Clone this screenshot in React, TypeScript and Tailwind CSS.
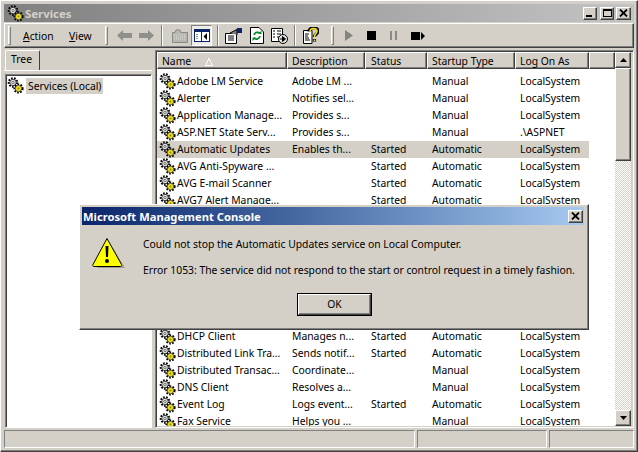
import React from 'react'

const raised =
  'border border-t-white border-l-white border-b-[#404040] border-r-[#404040] shadow-[inset_-1px_-1px_0_#808080]'
const sunken =
  'border border-t-[#808080] border-l-[#808080] border-b-white border-r-white shadow-[inset_1px_1px_0_#404040]'
const etched = 'border border-t-[#808080] border-l-[#808080] border-b-white border-r-white'

const rowsTop = [
  ['Adobe LM Service', 'Adobe LM ...', '', 'Manual', 'LocalSystem'],
  ['Alerter', 'Notifies sel...', '', 'Manual', 'LocalSystem'],
  ['Application Manage...', 'Provides s...', '', 'Manual', 'LocalSystem'],
  ['ASP.NET State Serv...', 'Provides s...', '', 'Manual', '.\\ASPNET'],
  ['Automatic Updates', 'Enables th...', 'Started', 'Automatic', 'LocalSystem'],
  ['AVG Anti-Spyware ...', '', 'Started', 'Automatic', 'LocalSystem'],
  ['AVG E-mail Scanner', '', 'Started', 'Automatic', 'LocalSystem'],
  ['AVG7 Alert Manage...', '', 'Started', 'Automatic', 'LocalSystem'],
]

const rowsBottom = [
  ['DHCP Client', 'Manages n...', 'Started', 'Automatic', 'LocalSystem'],
  ['Distributed Link Tra...', 'Sends notif...', 'Started', 'Automatic', 'LocalSystem'],
  ['Distributed Transac...', 'Coordinate...', '', 'Manual', 'LocalSystem'],
  ['DNS Client', 'Resolves a...', '', 'Manual', 'LocalSystem'],
  ['Event Log', 'Logs event...', 'Started', 'Automatic', 'LocalSystem'],
  ['Fax Service', 'Helps you ...', '', 'Manual', 'LocalSystem'],
]

const Gears = () => (
  <svg width="17" height="17" viewBox="0 0 17 17" className="shrink-0">
    <circle cx="6" cy="5.5" r="4.2" fill="none" stroke="#000" strokeWidth="2.2" strokeDasharray="1.6 1.3" />
    <circle cx="6" cy="5.5" r="3.2" fill="#e0e0e0" stroke="#222" strokeWidth="0.8" />
    <circle cx="6" cy="5.5" r="1.1" fill="#fff" stroke="#222" strokeWidth="0.6" />
    <circle cx="11.5" cy="11.5" r="4" fill="none" stroke="#000" strokeWidth="2.2" strokeDasharray="1.6 1.3" />
    <circle cx="11.5" cy="11.5" r="3.2" fill="#f2e21c" stroke="#333" strokeWidth="0.8" />
    <circle cx="11.5" cy="11.5" r="1" fill="#8a8000" />
  </svg>
)

const Grip = () => <div className="w-[3px] h-[19px] bg-[#d4d0c8] border border-t-white border-l-white border-b-[#808080] border-r-[#808080]" />
const Sep = () => <div className="w-[2px] h-[21px] border-l border-l-[#808080] border-r border-r-white" />

const Row = ({ cells, selected }: { cells: string[]; selected?: boolean }) => (
  <div className={`flex items-center h-[17px] ${selected ? 'bg-[#d4d0c8]' : ''} w-[432px]`}>
    <div className="w-[130px] flex items-center pl-[2px] gap-[1px]">
      <Gears />
      <span className="whitespace-nowrap">{cells[0]}</span>
    </div>
    <div className="w-[78px] pl-[5px] whitespace-nowrap">{cells[1]}</div>
    <div className="w-[62px] pl-[6px]">{cells[2]}</div>
    <div className="w-[88px] pl-[5px]">{cells[3]}</div>
    <div className="w-[74px] pl-[5px]">{cells[4]}</div>
  </div>
)

const HeaderCell = ({ width, children }: { width: string; children?: React.ReactNode }) => (
  <div className={`${width} h-full flex items-center pl-[4px] pt-[2px] ${raised}`}>{children}</div>
)

const CaptionButton = ({ children, className }: { children: React.ReactNode; className?: string }) => (
  <div className={`h-[13px] bg-[#d4d0c8] flex items-center justify-center ${raised} ${className ?? ''}`}>{children}</div>
)

const CloseGlyph = () => (
  <svg width="9" height="8" viewBox="0 0 9 8">
    <path d="M1 0.5 L8 7.5 M8 0.5 L1 7.5" stroke="#000" strokeWidth="1.8" />
  </svg>
)

export default function App() {
  return (
    <div className={`relative w-[638px] h-[452px] overflow-hidden bg-[#d4d0c8] p-[3px] flex flex-col text-[10.35px] leading-[13px] text-black font-['Noto_Sans',sans-serif] ${raised}`}>
      {/* title bar */}
      <div className="h-[18px] shrink-0 flex items-center pl-[3px] pr-[3px] bg-gradient-to-r from-[#808080] to-[#c4c4c4]">
        <Gears />
        <span className="ml-[1px] font-bold text-[11.4px] text-[#d4d0c8]">Services</span>
        <div className="ml-auto flex items-center">
          <CaptionButton className="w-[14px]"><div className="w-[6px] h-[2px] bg-black mt-[6px] mr-[2px]" /></CaptionButton>
          <CaptionButton className="w-[14px] ml-[3px]"><div className="w-[9px] h-[8px] border border-black border-t-2" /></CaptionButton>
          <CaptionButton className="w-[15px] ml-[2px]"><CloseGlyph /></CaptionButton>
        </div>
      </div>

      {/* toolbar */}
      <div className={`mt-[1px] h-[25px] shrink-0 flex items-center pl-[3px] ${raised}`}>
        <Grip />
        <span className="ml-[12px] mt-[1px] w-[46px]"><span className="underline">A</span>ction</span>
        <span className="mt-[1px] w-[36px]"><span className="underline">V</span>iew</span>
        <Grip />
        <svg width="15" height="11" viewBox="0 0 15 11" className="ml-[9px]">
          <path d="M0 5.5 L6 0 V3 H15 V8 H6 V11 Z" fill="#8f8f8b" />
        </svg>
        <svg width="15" height="11" viewBox="0 0 15 11" className="ml-[7px]">
          <path d="M15 5.5 L9 0 V3 H0 V8 H9 V11 Z" fill="#8f8f8b" />
        </svg>
        <div className="ml-[7px]"><Sep /></div>
        <svg width="16" height="14" viewBox="0 0 16 14" className="ml-[9px]">
          <path d="M0.5 3.5 H3 L4 1 H8 L9 3.5 H15.5 V13.5 H0.5 Z" fill="#b8b6b0" stroke="#8a8a86" />
          <path d="M2 6 H14 M2 8 H14 M2 10 H14" stroke="#dcdad4" strokeDasharray="1 1" />
        </svg>
        <div className="ml-[3px] w-[21px] h-[21px] flex items-center justify-center border border-t-[#808080] border-l-[#808080] border-b-white border-r-white bg-[#eeece8]">
          <svg width="16" height="13" viewBox="0 0 16 13">
            <rect x="0" y="0" width="16" height="13" fill="#0a246a" />
            <rect x="1" y="3" width="6" height="9" fill="#fff" />
            <rect x="8" y="3" width="7" height="9" fill="#fff" />
            <path d="M13 4 V11 L9.5 7.5 Z" fill="#000" />
            <path d="M3 5 V10" stroke="#0a246a" strokeDasharray="1 1" />
          </svg>
        </div>
        <div className="ml-[5px]"><Sep /></div>
        <svg width="18" height="16" viewBox="0 0 18 16" className="ml-[6px]">
          <path d="M0.5 5.5 H11.5 V15.5 H0.5 Z" fill="#fff" stroke="#000" />
          <path d="M3 8 H9 M3 10 H9 M3 12 H9" stroke="#000" />
          <path d="M5 5 L12 1.5 V7" fill="#808080" stroke="#000" />
          <rect x="12" y="0" width="5" height="5" fill="#0a246a" />
        </svg>
        <svg width="14" height="17" viewBox="0 0 14 17" className="ml-[7px]">
          <path d="M0.5 0.5 H9 L13.5 5 V16.5 H0.5 Z" fill="#fff" stroke="#000" />
          <path d="M4 8 A3.5 3.5 0 0 1 10 6.5 M10 9 A3.5 3.5 0 0 1 4 11" fill="none" stroke="#0a8a2a" strokeWidth="1.8" />
          <path d="M8 7 H11.5 V3.5 Z M6 10.5 H2.5 V14 Z" fill="#0a8a2a" />
        </svg>
        <svg width="17" height="16" viewBox="0 0 17 16" className="ml-[7px]">
          <path d="M0.5 0.5 H11.5 V13.5 H0.5 Z" fill="#fff" stroke="#000" />
          <path d="M2 3 H4 M6 3 H10 M2 6 H4 M6 6 H10 M2 9 H4 M6 9 H8" stroke="#000" />
          <circle cx="12" cy="11" r="4.5" fill="#e8e8e8" stroke="#000" />
          <path d="M9 11 H13 M11.5 8.5 L14.5 11 L11.5 13.5 Z" stroke="#000" fill="#000" />
        </svg>
        <div className="ml-[6px]"><Sep /></div>
        <svg width="16" height="17" viewBox="0 0 16 17" className="ml-[7px]">
          <path d="M0.5 3.5 H9 V16.5 H0.5 Z" fill="#fff" stroke="#000" />
          <path d="M2 7 H6 M2 9 H5 M2 11 H6 M2 13 H7" stroke="#000" />
          <path d="M6 4.5 C6 -0.5 15 -0.5 15 4 C15 7 11.5 7 11.5 10 M11.5 12 V14.5" fill="none" stroke="#000" strokeWidth="3.2" />
          <path d="M7 4.5 C7 0.5 14 0.5 14 4 C14 6.5 11.5 6.8 11.5 10 M11.5 12.5 V14" fill="none" stroke="#f4e21c" strokeWidth="1.6" />
        </svg>
        <div className="ml-[12px]"><Grip /></div>
        <svg width="8" height="11" viewBox="0 0 8 11" className="ml-[11px]">
          <path d="M0 0 L8 5.5 L0 11 Z" fill="#85857f" />
        </svg>
        <div className="ml-[14px] w-[9px] h-[9px] bg-black" />
        <div className="ml-[14px] flex gap-[3px]">
          <div className="w-[2px] h-[9px] bg-[#8a8a86]" />
          <div className="w-[2px] h-[9px] bg-[#8a8a86]" />
        </div>
        <div className="ml-[14px] w-[9px] h-[8px] bg-black" />
        <svg width="4" height="8" viewBox="0 0 4 8" className="ml-[1px]">
          <path d="M0 0 L4 4 L0 8 Z" fill="#000" />
        </svg>
      </div>

      {/* panes */}
      <div className="mt-[2px] flex-1 min-h-0 flex">
        <div className="w-[148px] shrink-0 flex flex-col">
          <div className="h-[21px] shrink-0 flex items-end border-b border-b-white">
            <div className="ml-[1px] h-[20px] w-[35px] pl-[5px] pt-[2px] border border-t-white border-l-white border-r-[#404040] border-b-0 rounded-t-[2px]">Tree</div>
          </div>
          <div className={`mt-[3px] ml-[1px] flex-1 bg-white ${sunken}`}>
            <div className="flex items-center pt-[2px] pl-[1px]">
              <Gears />
              <span className="ml-[2px] bg-[#d4d0c8] h-[16px] leading-[16px] px-[2px]">Services (Local)</span>
            </div>
          </div>
        </div>

        <div className={`ml-[3px] flex-1 min-w-0 flex overflow-hidden p-[1px] ${sunken}`}>
          <div className="flex-1 min-w-0 bg-white flex flex-col overflow-hidden">
            <div className="h-[17px] shrink-0 flex bg-[#d4d0c8]">
              <HeaderCell width="w-[130px]">
                <span>Name</span>
                <svg width="8" height="8" viewBox="0 0 8 8" className="ml-[14px]">
                  <path d="M4 0.5 L7.5 7.5 H0.5 Z" fill="#d4d0c8" stroke="#fff" />
                </svg>
              </HeaderCell>
              <HeaderCell width="w-[78px]">Description</HeaderCell>
              <HeaderCell width="w-[62px]"><span className="ml-[1px]">Status</span></HeaderCell>
              <HeaderCell width="w-[88px]">Startup Type</HeaderCell>
              <HeaderCell width="w-[74px]">Log On As</HeaderCell>
              <HeaderCell width="flex-1" />
            </div>
            <div className="flex-1 min-h-0 pt-[4px] overflow-hidden">
              {rowsTop.map((r) => (
                <Row key={r[0]} cells={r} selected={r[0] === 'Automatic Updates'} />
              ))}
              <div className="h-[119px]" />
              {rowsBottom.map((r) => (
                <Row key={r[0]} cells={r} />
              ))}
            </div>
          </div>
          {/* scrollbar */}
          <div className="w-[16px] shrink-0 flex flex-col mr-[1px]">
            <div className={`h-[16px] shrink-0 bg-[#d4d0c8] flex items-center justify-center ${raised}`}>
              <svg width="7" height="4" viewBox="0 0 7 4"><path d="M3.5 0 L7 4 H0 Z" fill="#000" /></svg>
            </div>
            <div className={`h-[93px] shrink-0 bg-[#d4d0c8] ${raised}`} />
            <div className="flex-1 bg-[repeating-conic-gradient(#d4d0c8_0_25%,#fff_0_50%)] bg-[length:2px_2px]" />
            <div className={`h-[16px] shrink-0 bg-[#d4d0c8] flex items-center justify-center ${raised}`}>
              <svg width="7" height="4" viewBox="0 0 7 4"><path d="M0 0 H7 L3.5 4 Z" fill="#000" /></svg>
            </div>
          </div>
        </div>
      </div>

      {/* status bar */}
      <div className="mt-[2px] h-[18px] shrink-0 flex gap-[2px]">
        <div className={`w-[411px] ${etched}`} />
        <div className={`w-[130px] ${etched}`} />
        <div className={`flex-1 ${etched}`} />
      </div>

      {/* error dialog */}
      <div className={`absolute left-[78px] top-[203px] w-[510px] h-[126px] bg-[#d4d0c8] pt-[2px] pl-[2px] pr-[4px] flex flex-col ${raised}`}>
        <div className="h-[18px] shrink-0 flex items-center pl-[1px] pr-[1px] bg-gradient-to-r from-[#0a246a] to-[#a6caf0]">
          <span className="font-bold text-[11.2px] text-white">Microsoft Management Console</span>
          <CaptionButton className="w-[15px] ml-auto"><CloseGlyph /></CaptionButton>
        </div>
        <div className="flex flex-1 pl-[10px] pt-[12px]">
          <svg width="34" height="33" viewBox="0 0 34 33" className="shrink-0">
            <path d="M5 31 H33 L18 6 Z" fill="#8a8880" opacity="0.7" />
            <path d="M15 1.5 L29.5 27.5 C30 29 29 29.5 28 29.5 H2 C1 29.5 0.3 28.5 1 27.5 Z" fill="#ffff00" stroke="#000" strokeWidth="1" strokeLinejoin="round" />
            <path d="M13.5 9 H16.5 L16 20 H14 Z" fill="#000" />
            <circle cx="15" cy="24" r="2" fill="#000" />
          </svg>
          <div className="ml-[17px] flex-1 flex flex-col">
            <p className="mt-[1px] whitespace-nowrap">Could not stop the Automatic Updates service on Local Computer.</p>
            <p className="mt-[13px] whitespace-nowrap">Error 1053: The service did not respond to the start or control request in a timely fashion.</p>
            <div className={`mt-[17px] ml-[155px] w-[73px] h-[21px] flex items-center justify-center outline outline-1 outline-black ${raised}`}>OK</div>
          </div>
        </div>
      </div>
    </div>
  )
}
